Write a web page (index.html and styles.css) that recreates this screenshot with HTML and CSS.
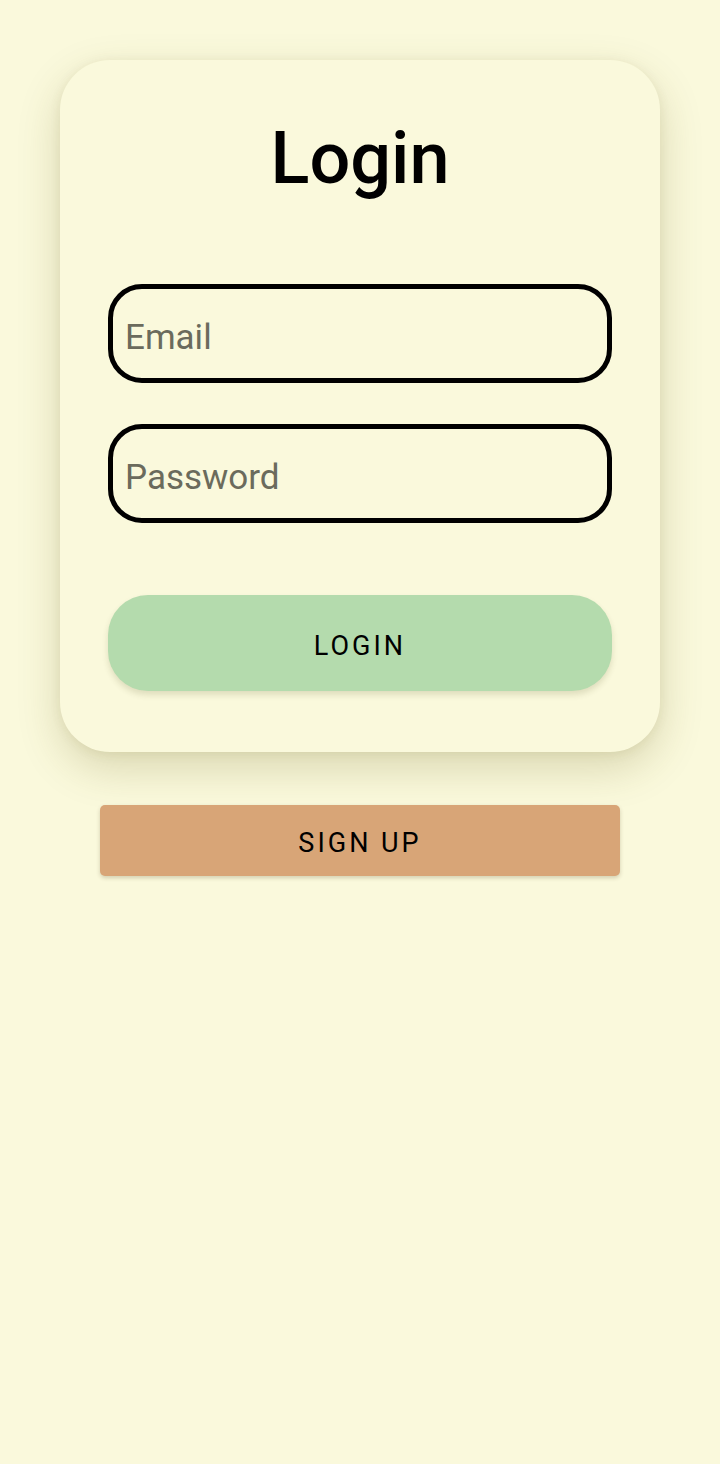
FILE: index.html
```html
<!DOCTYPE html>
<html lang="en">
<head>
<meta charset="utf-8">
<title>Login</title>
<link rel="stylesheet" href="styles.css">
</head>
<body>
<main class="screen">
  <section class="card">
    <h1 class="title">Login</h1>
    <div class="fields">
      <input class="field" type="email" placeholder="Email">
      <input class="field" type="password" placeholder="Password">
    </div>
    <button class="btn-login" type="button">LOGIN</button>
  </section>
  <button class="btn-signup" type="button">SIGN UP</button>
</main>
</body>
</html>
```
FILE: styles.css
```css
html, body {
  margin: 0;
  padding: 0;
  background: #faf9dc;
}
body {
  font-family: Roboto, "Noto Sans", "Liberation Sans", sans-serif;
  width: 720px;
  height: 1464px;
  overflow: hidden;
}
.screen {
  display: flex;
  flex-direction: column;
  align-items: center;
  padding-top: 60px;
}
.card {
  width: 600px;
  height: 692px;
  box-sizing: border-box;
  padding: 63px 48px 0;
  background: #faf9dc;
  border-radius: 50px;
  box-shadow: 0 16px 44px rgba(90, 80, 0, 0.2), 0 2px 12px rgba(90, 80, 0, 0.08);
  display: flex;
  flex-direction: column;
}
.title {
  margin: 0;
  font-size: 72px;
  line-height: 72px;
  font-weight: 500;
  text-align: center;
  color: #000;
}
.fields {
  display: flex;
  flex-direction: column;
  gap: 41px;
  margin-top: 89px;
}
.field {
  display: block;
  width: 504px;
  height: 99px;
  box-sizing: border-box;
  border: 5px solid #000;
  border-radius: 34px;
  background: transparent;
  padding: 7px 0 0 12px;
  font-family: Roboto, "Noto Sans", "Liberation Sans", sans-serif;
  font-size: 35px;
  color: #000;
  outline: none;
}
.field::placeholder {
  color: #6b6b5c;
}
.btn-login {
  margin-top: 72px;
  width: 504px;
  height: 96px;
  border: none;
  border-radius: 40px;
  background: #b4dbad;
  box-shadow: 0 4px 6px rgba(60, 60, 0, 0.14);
  font-family: Roboto, "Noto Sans", "Liberation Sans", sans-serif;
  font-size: 27px;
  font-weight: 400;
  letter-spacing: 3px;
  color: #000;
  padding: 6px 0 0;
}
.btn-signup {
  margin-top: 53px;
  width: 520px;
  height: 71px;
  border: none;
  border-radius: 5px;
  background: #d8a577;
  box-shadow: 0 2px 4px rgba(60, 40, 0, 0.2);
  font-family: Roboto, "Noto Sans", "Liberation Sans", sans-serif;
  font-size: 27px;
  font-weight: 400;
  letter-spacing: 3px;
  color: #000;
  padding: 4px 0 0;
}
```
